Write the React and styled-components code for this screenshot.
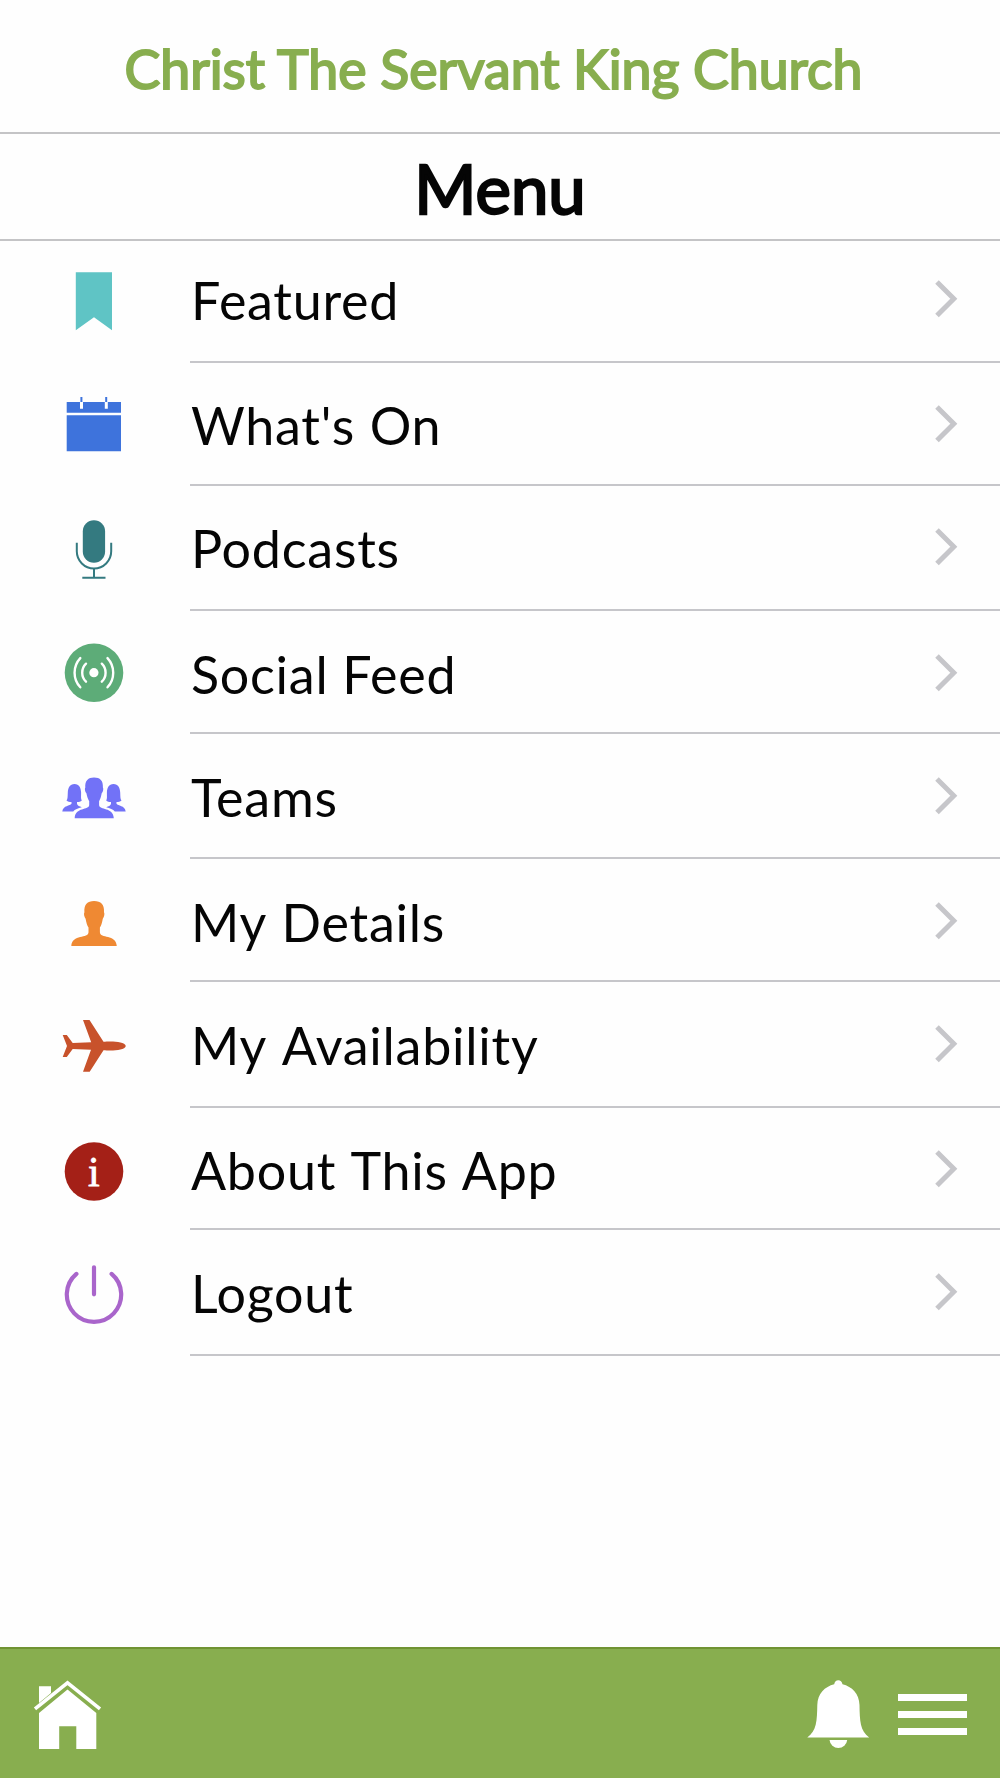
import React from "react";
import styled, { createGlobalStyle } from "styled-components";

const GlobalStyle = createGlobalStyle`
  * {
    box-sizing: border-box;
  }

  body {
    margin: 0;
    background: #fefefe;
    color: #050505;
    font-family: Lato, "Open Sans", sans-serif;
  }
`;

const WrapperStyled = styled.div`
  display: flex;
  flex-direction: column;
  height: 1778px;
  width: 1000px;
  overflow: hidden;
`;

const HeaderStyled = styled.header`
  display: flex;
  justify-content: center;
  height: 134px;
  padding: 35px 13px 0 0;
  border-bottom: 2px solid #c4c4c6;
  color: #88ae4f;
  font-size: 53.6px;
  line-height: 66px;
  white-space: nowrap;
  -webkit-text-stroke: 2px #88ae4f;
`;

const TitleStyled = styled.h1`
  height: 107px;
  margin: 0;
  padding-top: 13px;
  border-bottom: 2px solid #c4c4c6;
  font-size: 67px;
  font-weight: normal;
  line-height: 82px;
  text-align: center;
  -webkit-text-stroke: 2.4px #050505;
`;

const ListStyled = styled.ul`
  flex: 1;
  margin: 0;
  padding: 0;
  list-style: none;
`;

const RowStyled = styled.li`
  display: flex;
  height: ${(props) => props.$height}px;
`;

const IconCellStyled = styled.div`
  width: 190px;
  padding: ${(props) => props.$top}px 0 0 58px;

  svg {
    display: block;
  }
`;

const RowBodyStyled = styled.div`
  flex: 1;
  display: flex;
  justify-content: space-between;
  align-items: flex-start;
  padding: ${(props) => props.$top}px 41px 0 1px;
  border-bottom: 2px solid #c6c6ca;
`;

const LabelStyled = styled.span`
  font-size: 52px;
  line-height: 70px;
  letter-spacing: 0.75px;
  word-spacing: ${(props) => props.$wordGap || 0}px;
  white-space: nowrap;
`;

const ChevronStyled = styled.svg`
  margin-top: 14px;
`;

const FooterStyled = styled.footer`
  display: flex;
  align-items: flex-start;
  height: 131px;
  padding: 30px 33px 0 32px;
  border-top: 2px solid #709333;
  background: #88ae4f;
`;

const SpacerStyled = styled.div`
  flex: 1;
`;

const MenuButtonStyled = styled.div`
  display: flex;
  flex-direction: column;
  gap: 10px;
  width: 69px;
  margin: 15px 0 0 27px;
`;

const BarStyled = styled.span`
  height: 7px;
  background: #fff;
`;

const Icon = ({ children }) => (
  <svg width="72" height="72" viewBox="0 0 72 72">
    {children}
  </svg>
);

const BookmarkIcon = () => (
  <Icon>
    <path d="M17.8 7.2H54V65.3L36 52.3L17.8 65.3Z" fill="#5fc4c5" />
  </Icon>
);

const CalendarIcon = () => (
  <Icon>
    <path d="M8.7 12H63V22.8H8.7ZM8.7 25.3H63V61.2H8.7Z" fill="#3e73dc" />
    <path d="M22 12h3v6.7h-3zM46.8 12h3v6.7h-3z" fill="#fff" />
    <path d="M22.4 7h2v5h-2zM47.2 7h2v5h-2z" fill="#3e73dc" />
  </Icon>
);

const MicIcon = () => (
  <Icon>
    <rect x="24.8" y="7.3" width="22.3" height="42.4" rx="11.1" fill="#347a80" />
    <path
      d="M18.8 29.8V38.3A17.2 17.2 0 0 0 53.2 38.3V29.8M36 55.5V64.8M24.3 64.8H47.5"
      fill="none"
      stroke="#347a80"
      strokeWidth="2"
    />
  </Icon>
);

const FeedIcon = () => (
  <Icon>
    <circle cx="36" cy="33.7" r="29.3" fill="#5dac78" />
    <circle cx="35.9" cy="33.7" r="4.6" fill="#fff" />
    <path
      d="M28 24.7A12.6 12.6 0 0 0 28 42.7M22.3 19.1A21.5 21.5 0 0 0 22.3 48.3M43.8 24.7A12.6 12.6 0 0 1 43.8 42.7M49.5 19.1A21.5 21.5 0 0 1 49.5 48.3"
      fill="none"
      stroke="#fff"
      strokeWidth="2.4"
      strokeLinecap="round"
    />
  </Icon>
);

const SIDE_PERSON =
  "M16.5 22C11.8 22 10 25.8 9.8 30.5C9.6 34.5 9.8 37 8.5 38.4C9.8 39.6 11.5 40 13.5 40.1V41.8C12 44.2 5.2 43.2 4.3 49.4H15.2C16.8 47.4 20.2 46.2 23.8 45.2C21.7 44.6 19.3 43.6 19 41.8V40.1C21 40 22.6 39.5 23.8 38.4C22.6 37 23.2 34 23.1 30.5C22.9 25.8 21.2 22 16.5 22Z";

const TeamIcon = () => (
  <Icon>
    <g fill="#7272f7">
      <path d={SIDE_PERSON} />
      <path d={SIDE_PERSON} transform="matrix(-1 0 0 1 72 0)" />
      <path d="M36 15.4C30.3 15.4 26.8 18.5 27.3 25.5C26.4 27 27 29.7 28.4 31.2C29 34.5 30 37.2 31.2 39.2V43C31 48.5 17.3 44.8 16.7 56.2H55.8C55.2 44.8 41.3 48.5 41.1 43V39.2C42.3 37.2 43.1 34.5 43.7 31.2C45.1 29.7 45.8 27 44.9 25.5C45.3 18.5 42.1 15.4 36 15.4Z" />
    </g>
  </Icon>
);

const PersonIcon = () => (
  <Icon>
    <path
      d="M36.1 14C29.3 14 25.9 17.3 26.4 25.3C25.4 27 26.4 30.4 27.6 31.7C28.3 35.7 29.2 38.5 30.5 40.6V45.3C30.5 51.8 14 47 13.3 59.1H58.8C58.1 47 41.9 51.8 41.9 45.3V40.6C43.2 38.5 44.1 35.7 44.8 31.7C46 30.4 47 27 46 25.3C46.5 17.3 43 14 36.1 14Z"
      fill="#ef8933"
    />
  </Icon>
);

const PlaneIcon = () => (
  <Icon>
    <path
      d="M25 10H31.5L45.5 31.8C52 31.2 66.8 31 67.8 36C66.8 41 52 40.8 45.5 40.2L31.7 61.8H25L33 39.7L14.7 38.9L8.8 46.9H4.7L9 36L4.7 25H8.8L14.7 33L33.2 32.2Z"
      fill="#c8522b"
    />
  </Icon>
);

const InfoIcon = () => (
  <Icon>
    <circle cx="36" cy="36.5" r="29.3" fill="#a42017" />
    <text
      x="35.8"
      y="50.5"
      fill="#fff"
      stroke="#fff"
      strokeWidth="0.8"
      fontFamily="'Liberation Serif', serif"
      fontSize="42"
      textAnchor="middle"
    >
      i
    </text>
  </Icon>
);

const PowerIcon = () => (
  <Icon>
    <path
      d="M18.4 15.9A27.2 27.2 0 1 0 53.6 15.9M36 9.3V36.3"
      fill="none"
      stroke="#a965cb"
      strokeWidth="4.2"
      strokeLinecap="round"
    />
  </Icon>
);

const HomeIcon = () => (
  <svg width="72" height="72" viewBox="0 0 72 72" fill="#fff">
    <path d="M7 24V7.3H19V14L7 24Z" />
    <path d="M35.5 10.5L64.3 34V70H44.3V47.3H27.2V70H7V34Z" />
    <path d="M3 29.8L35.5 3.8L68 29.8" fill="none" stroke="#fff" strokeWidth="3.6" />
  </svg>
);

const BellIcon = () => (
  <svg width="64" height="72" viewBox="0 0 64 72" fill="#fff">
    <path d="M31.3 1.2C33.5 1.2 34.9 2.7 35.5 5.2C45 7.5 52.2 14.7 52.5 26C52.8 42 53 51.5 62.2 58.6H.3C9.7 51.5 10 42 10.3 26C10.6 14.7 17.8 7.5 27.2 5.2C27.7 2.7 29.1 1.2 31.3 1.2Z" />
    <path d="M22.5 61H40.2A8.9 8.9 0 0 1 22.5 61Z" />
  </svg>
);

const Chevron = () => (
  <ChevronStyled width="24" height="40" viewBox="0 0 24 40" fill="none">
    <path d="M2 3L18.8 19.8L2 36.6" stroke="#c6c6ca" strokeWidth="5" />
  </ChevronStyled>
);

const items = [
  { label: "Featured", icon: BookmarkIcon, height: 122, top: 24 },
  { label: "What's On", icon: CalendarIcon, height: 123, top: 27, wordGap: 0.7 },
  { label: "Podcasts", icon: MicIcon, height: 125, top: 27 },
  { label: "Social Feed", icon: FeedIcon, height: 123, top: 28, wordGap: -0.3 },
  { label: "Teams", icon: TeamIcon, height: 125, top: 28 },
  { label: "My Details", icon: PersonIcon, height: 123, top: 28, wordGap: 1.8 },
  { label: "My Availability", icon: PlaneIcon, height: 126, top: 28, wordGap: 3.8 },
  { label: "About This App", icon: InfoIcon, height: 122, top: 27, wordGap: 1.8 },
  { label: "Logout", icon: PowerIcon, height: 126, top: 28 },
];

const App = () => {
  return (
    <WrapperStyled>
      <GlobalStyle />
      <HeaderStyled>Christ The Servant King Church</HeaderStyled>
      <TitleStyled>Menu</TitleStyled>
      <ListStyled>
        {items.map(({ label, icon: ItemIcon, height, top, wordGap }) => (
          <RowStyled key={label} $height={height}>
            <IconCellStyled $top={top}>
              <ItemIcon />
            </IconCellStyled>
            <RowBodyStyled $top={top}>
              <LabelStyled $wordGap={wordGap}>{label}</LabelStyled>
              <Chevron />
            </RowBodyStyled>
          </RowStyled>
        ))}
      </ListStyled>
      <FooterStyled>
        <HomeIcon />
        <SpacerStyled />
        <BellIcon />
        <MenuButtonStyled>
          <BarStyled />
          <BarStyled />
          <BarStyled />
        </MenuButtonStyled>
      </FooterStyled>
    </WrapperStyled>
  );
};

export default App;
